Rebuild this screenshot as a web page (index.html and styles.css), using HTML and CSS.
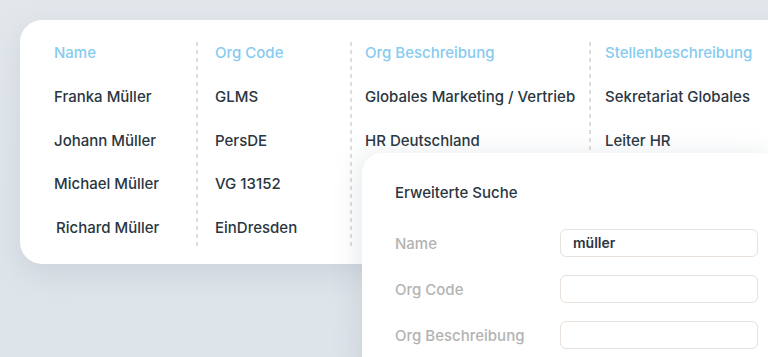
FILE: index.html
```html
<!DOCTYPE html>
<html lang="de">
<head>
<meta charset="utf-8">
<link rel="stylesheet" href="styles.css">
</head>
<body>
<div class="stage">
  <div class="card">
    <div class="col col-name">
      <div class="head">Name</div>
      <div class="cell">Franka Müller</div>
      <div class="cell">Johann Müller</div>
      <div class="cell">Michael Müller</div>
      <div class="cell indent">Richard Müller</div>
    </div>
    <div class="sep"></div>
    <div class="col col-code">
      <div class="head">Org Code</div>
      <div class="cell">GLMS</div>
      <div class="cell">PersDE</div>
      <div class="cell">VG 13152</div>
      <div class="cell">EinDresden</div>
    </div>
    <div class="sep"></div>
    <div class="col col-desc">
      <div class="head">Org Beschreibung</div>
      <div class="cell">Globales Marketing / Vertrieb</div>
      <div class="cell">HR Deutschland</div>
      <div class="cell"></div>
      <div class="cell"></div>
    </div>
    <div class="sep"></div>
    <div class="col col-job">
      <div class="head">Stellenbeschreibung</div>
      <div class="cell">Sekretariat Globales</div>
      <div class="cell">Leiter HR</div>
      <div class="cell"></div>
      <div class="cell"></div>
    </div>
  </div>

  <div class="panel">
    <div class="panel-title">Erweiterte Suche</div>
    <div class="field">
      <span class="label">Name</span>
      <div class="input">müller</div>
    </div>
    <div class="field">
      <span class="label">Org Code</span>
      <div class="input"></div>
    </div>
    <div class="field">
      <span class="label">Org Beschreibung</span>
      <div class="input"></div>
    </div>
  </div>
</div>
</body>
</html>
```

FILE: styles.css
```css
html, body {
  margin: 0;
  padding: 0;
}
body {
  width: 768px;
  height: 357px;
  overflow: hidden;
  font-family: Inter, "Noto Sans", sans-serif;
  background: linear-gradient(180deg, #e2e7eb 0%, #dfe5ea 60%, #dde4ea 100%);
}
.stage {
  position: relative;
  width: 768px;
  height: 357px;
  overflow: hidden;
  padding: 20px 0 0 20px;
  box-sizing: border-box;
}
.card {
  display: flex;
  width: 800px;
  background: #fff;
  border-radius: 22px;
  padding: 22px 0 15px 0;
  box-shadow: 0 10px 28px rgba(120, 135, 150, 0.18);
}
.col {
  display: flex;
  flex-direction: column;
  font-size: 15px;
  font-weight: 500;
  color: #2a3641;
}
.col-name { width: 142px; padding-left: 34px; }
.col-code { width: 135px; padding-left: 17px; }
.col-desc { width: 224px; padding-left: 13px; }
.col-job { width: 200px; padding-left: 14px; }
.head {
  height: 22px;
  line-height: 22px;
  color: #86cbf0;
  margin-bottom: 11px;
}
.cell {
  height: 43.5px;
  line-height: 43.5px;
  white-space: nowrap;
}
.indent { padding-left: 2px; }
.sep {
  width: 2px;
  align-self: stretch;
  background: repeating-linear-gradient(180deg, #e4dad4 0 4px, transparent 4px 8px);
}
.panel {
  position: absolute;
  left: 362px;
  top: 153px;
  width: 420px;
  height: 230px;
  background: #fff;
  border-radius: 20px;
  box-shadow: -6px 0 24px rgba(120, 135, 150, 0.16);
  padding: 29px 0 0 33px;
  box-sizing: border-box;
}
.panel-title {
  font-size: 15px;
  font-weight: 500;
  color: #2a3641;
  line-height: 22px;
  margin-bottom: 25px;
}
.field {
  display: flex;
  align-items: center;
  height: 28px;
  margin-bottom: 18px;
}
.label {
  width: 165px;
  font-size: 15px;
  font-weight: 500;
  color: #b3b3b1;
}
.input {
  width: 198px;
  height: 28px;
  box-sizing: border-box;
  border: 1px solid #e9e1db;
  border-radius: 6px;
  padding-left: 12px;
  font-size: 14px;
  font-weight: 600;
  color: #2a3641;
  line-height: 26px;
}
```
